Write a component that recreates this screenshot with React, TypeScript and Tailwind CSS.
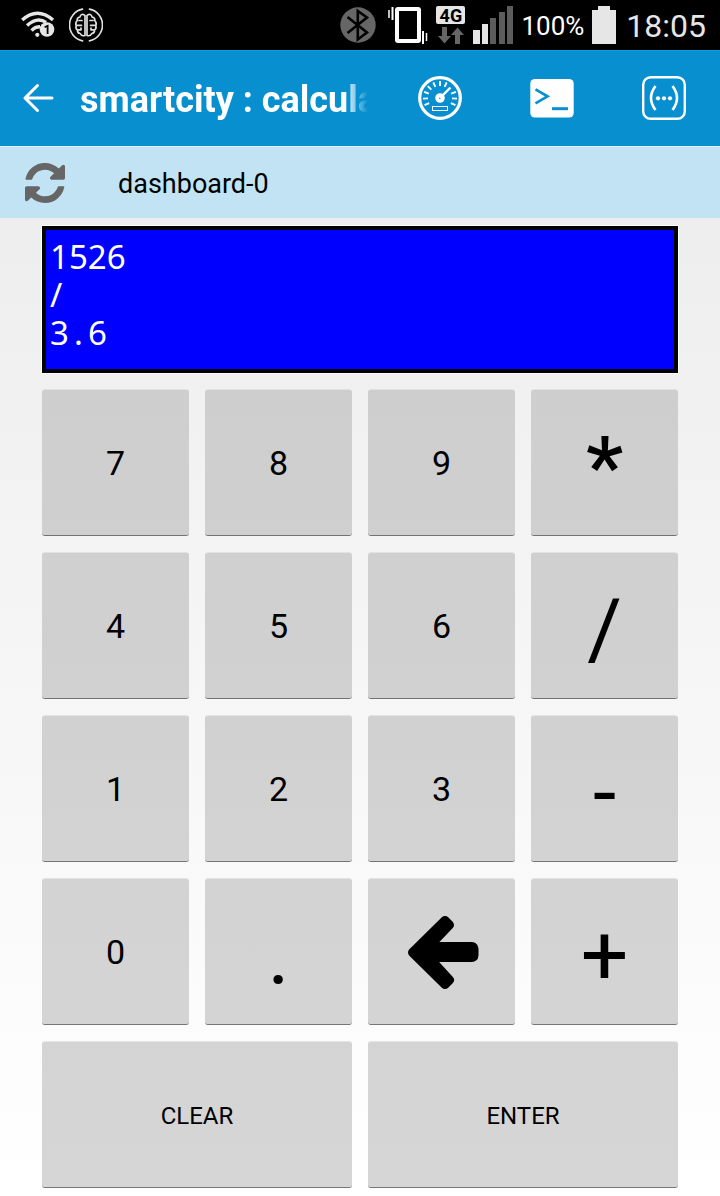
import type { ReactNode } from "react";

function WifiIcon() {
  return (
    <svg width="34" height="28" viewBox="0 0 34 28" fill="none" stroke="#e6e6e6" strokeWidth="3.4">
      <path d="M1.2 9 Q16.5 -4.5 32 9" />
      <path d="M6 14.5 Q16.5 5.2 25 11.4" />
      <path d="M10.6 19.6 Q14 15.8 19 15.8" />
      <circle cx="16.3" cy="23.8" r="2.1" fill="#e6e6e6" stroke="none" />
      <circle cx="26" cy="18.5" r="7.3" fill="#e6e6e6" stroke="none" />
      <path d="M23.6 16.2 L26.6 14.8 V23" stroke="#000" strokeWidth="1.8" />
    </svg>
  );
}

function BrainIcon() {
  return (
    <svg width="34" height="34" viewBox="0 0 34 34" fill="none" stroke="#e0e0e0" strokeWidth="1.7" strokeLinecap="round" strokeLinejoin="round">
      <path d="M13.5 1.2 A16.1 16.1 0 0 0 13.5 32.8 M20.500 1.2 A16.1 16.1 0 0 1 20.500 32.8" />
      <path d="M16 7.500 Q14.500 5.800 12.800 6.500 Q11.200 7 11 9 Q7.800 9.500 8.200 12.500 Q6 15 7.200 17.500 Q6.300 20.500 8.500 22 Q8.200 25 11.200 25.500 Q12.500 28.500 16 27.500 Z" />
      <path d="M18 7.500 Q19.500 5.800 21.200 6.500 Q22.800 7 23 9 Q26.200 9.500 25.800 12.500 Q28 15 26.800 17.500 Q27.700 20.500 25.500 22 Q25.800 25 22.800 25.500 Q21.500 28.500 18 27.500 Z" />
      <path d="M10 12.500 H13 M8.500 17.300 H12.500 M9.500 21.800 H12 V20 M24 12.500 H21 M25.500 17.300 H21.500 M24.500 21.800 H22 V20" />
    </svg>
  );
}

function BluetoothIcon() {
  return (
    <svg width="36" height="36" viewBox="0 0 36 36" fill="none">
      <circle cx="18" cy="18" r="17.700" fill="#666" />
      <path d="M7.500 10 L27 25.500 L17.800 32.500 V4 L27 10.500 L7.500 26" stroke="#000" strokeWidth="2.600" />
    </svg>
  );
}

function VibrateIcon() {
  return (
    <svg width="40" height="38" viewBox="0 0 40 38" fill="none" stroke="#fff">
      <rect x="9" y="3" width="22" height="32" rx="1" strokeWidth="4" />
      <path d="M1 4 V12 M38.500 27 V35" strokeWidth="1.500" />
      <path d="M4.500 1 V14 M35 25 V38" strokeWidth="2" />
    </svg>
  );
}

function DataArrows() {
  return (
    <svg width="26" height="17" viewBox="0 0 26 17" fill="#666">
      <path d="M4 0 H9 V9 H13 L6.500 16.500 L0 9 H4 Z M17 17 H22 V8 H26 L19.500 0.500 L13 8 H17 Z" />
    </svg>
  );
}

function SignalIcon() {
  return (
    <svg width="40" height="38" viewBox="0 0 40 38">
      <path d="M0 24 H7 V38 H0 Z M9 18 H15 V38 H9 Z" fill="#e6e6e6" />
      <path d="M17 12 H23 V38 H17 Z M26 6 H32 V38 H26 Z M34 0 H40 V38 H34 Z" fill="#5c5c5c" />
    </svg>
  );
}

function BatteryIcon() {
  return (
    <svg width="24" height="38" viewBox="0 0 24 38">
      <path d="M6 0 H18 V4 H24 V38 H0 V4 H6 Z" fill="#e6e6e6" />
    </svg>
  );
}

function BackIcon() {
  return (
    <svg width="32" height="30" viewBox="0 0 32 30" fill="none" stroke="#fff" strokeWidth="3" strokeLinecap="round" strokeLinejoin="round">
      <path d="M15.500 2.500 L3 15 L15.500 27.500 M3 15 H30" />
    </svg>
  );
}

const gaugeTicks = [-115, -92, -69, -46, -23, 0, 23, 69, 92, 115];

function GaugeIcon() {
  return (
    <svg width="44" height="44" viewBox="0 0 44 44" fill="none" stroke="#fff">
      <circle cx="22" cy="22" r="20.300" strokeWidth="3.200" />
      {gaugeTicks.map((angle) => (
        <path key={angle} d="M22 5 V10" strokeWidth="1.900" transform={`rotate(${angle} 22 22)`} />
      ))}
      <path d="M22 22 L32.500 11.500" strokeWidth="2.400" />
      <circle cx="22" cy="22" r="2.900" strokeWidth="3.800" />
      <rect x="14.500" y="30.500" width="15" height="4" strokeWidth="1" />
    </svg>
  );
}

function TerminalIcon() {
  return (
    <svg width="44" height="44" viewBox="0 0 44 44" fill="none">
      <rect x="0.300" y="3" width="43.400" height="38.500" rx="4.500" fill="#fff" />
      <path d="M5.500 13.300 L17.500 20.300 L5.500 27.300" stroke="#078fd0" strokeWidth="2.700" />
      <path d="M22 32.700 H38" stroke="#078fd0" strokeWidth="3" />
    </svg>
  );
}

function BracketsIcon() {
  return (
    <svg width="44" height="44" viewBox="0 0 44 44" fill="none" stroke="#fff">
      <rect x="1.200" y="1.200" width="41.600" height="41.600" rx="7.500" strokeWidth="2.400" />
      <path d="M13.500 10 Q4.500 22 13.500 34 M30.500 10 Q39.500 22 30.500 34" strokeWidth="2.600" />
      <g fill="#fff" stroke="none">
        <circle cx="16" cy="22.300" r="2.100" />
        <circle cx="22" cy="22.300" r="2.100" />
        <circle cx="28" cy="22.300" r="2.100" />
      </g>
    </svg>
  );
}

function RefreshIcon() {
  return (
    <svg width="40" height="40" viewBox="0 0 1536 1536" fill="#666">
      <path d="M1511 928q0 5-1 7q-64 268-268 434.500t-478 166.500q-146 0-282.500-55t-243.500-157l-129 129q-19 19-45 19t-45-19t-19-45v-448q0-26 19-45t45-19h448q26 0 45 19t19 45t-19 45l-137 137q71 66 161 102t187 36q134 0 250-65t186-179q11-17 53-117q8-23 30-23h192q13 0 22.500 9.500t9.500 22.500zM1536 128v448q0 26-19 45t-45 19h-448q-26 0-45-19t-19-45t19-45l138-138q-148-137-349-137q-134 0-250 65t-186 179q-11 17-53 117q-8 23-30 23h-199q-13 0-22.500-9.500t-9.500-22.500v-7q65-268 270-434.500t480-166.500q146 0 284 55.500t245 156.500l130-129q19-19 45-19t45 19t19 45z" />
    </svg>
  );
}

function BackspaceArrow() {
  return (
    <svg width="74" height="76" viewBox="0 0 74 76" stroke="#000" strokeLinejoin="round">
      <path d="M40 6.500 L44.500 11 L24 32.500 H66 Q69 32.500 69 34.500 V41.500 Q69 43.500 66 43.500 H24 L44.500 66 L40 70.500 L7.500 38.500 Z" strokeWidth="9" />
    </svg>
  );
}

type KeyProps = { children: ReactNode; kind?: "digit" | "symbol" | "wide"; label?: string };

const kinds = {
  digit: "aspect-square text-[34px]",
  symbol: "aspect-square pt-2 text-[84px]",
  wide: "col-span-2 pt-0.5 text-2xl",
};

function Key({ children, kind = "digit", label }: KeyProps) {
  return (
    <button
      type="button"
      aria-label={label}
      className={`flex min-w-0 items-center justify-center rounded-[3px] border-t border-b border-t-white/40 border-b-black/45 bg-[rgba(161,161,161,0.44)] leading-none ${kinds[kind]}`}
    >
      {children}
    </button>
  );
}

export default function App() {
  return (
    <div className="flex min-h-screen flex-col bg-linear-to-b from-[#eaeaea] to-white font-['Roboto',sans-serif] text-black">
      <div className="flex h-[50px] items-center justify-between bg-black pr-[14px] pl-[21px] text-[#e6e6e6]">
        <div className="flex items-center gap-[14px]">
          <WifiIcon />
          <BrainIcon />
        </div>
        <div className="flex items-center gap-2">
          <BluetoothIcon />
          <div className="pl-1">
            <VibrateIcon />
          </div>
          <div className="flex flex-col items-center gap-[3px]">
            <span className="flex h-[18px] w-[29px] items-center justify-center rounded-[2px] bg-[#e6e6e6] text-[18px] font-bold text-black">
              4G
            </span>
            <DataArrows />
          </div>
          <SignalIcon />
          <span className="pt-0.5 text-[26px] leading-8 text-white">100%</span>
          <BatteryIcon />
          <span className="pt-0.5 pl-0.5 text-[32px] leading-8">18:05</span>
        </div>
      </div>

      <header className="flex h-24 items-center border-t border-[#0a9be2] bg-[#078fd0] pb-0.5 text-white">
        <button type="button" aria-label="Back" className="flex w-20 shrink-0 pl-[22px]">
          <BackIcon />
        </button>
        <h1 className="mr-4 min-w-0 flex-1 overflow-hidden pt-1 text-[36px] leading-10 font-bold whitespace-nowrap [mask-image:linear-gradient(to_right,black_calc(100%-24px),transparent)]">
          smartcity : calcula
        </h1>
        <nav className="flex shrink-0">
          <button type="button" aria-label="Dashboards" className="flex w-28 justify-center">
            <GaugeIcon />
          </button>
          <button type="button" aria-label="Console" className="flex w-28 justify-center">
            <TerminalIcon />
          </button>
          <button type="button" aria-label="Variables" className="flex w-28 justify-center">
            <BracketsIcon />
          </button>
        </nav>
      </header>

      <div className="flex h-[72px] items-center border-t border-[#dcf0f9] bg-[#c1e3f4]">
        <button type="button" aria-label="Refresh" className="flex w-[118px] pl-[25px]">
          <RefreshIcon />
        </button>
        <span className="pt-0.5 text-[27px] leading-8">dashboard-0</span>
      </div>

      <main className="flex flex-col gap-4 px-[42px] py-2">
        <output className="block h-[147px] border-4 border-black bg-[#0000ff] px-1 py-2 font-['Noto_Sans',sans-serif] text-[33px] leading-[38px] text-white outline outline-white">
          <p>1526</p>
          <p>/</p>
          <p>
            3<span className="inline-block w-[19px] text-center">.</span>6
          </p>
        </output>
        <div className="grid grid-cols-4 gap-4">
          <Key>7</Key>
          <Key>8</Key>
          <Key>9</Key>
          <Key kind="symbol">
            <span className="font-medium">*</span>
          </Key>
          <Key>4</Key>
          <Key>5</Key>
          <Key>6</Key>
          <Key kind="symbol">/</Key>
          <Key>1</Key>
          <Key>2</Key>
          <Key>3</Key>
          <Key kind="symbol">-</Key>
          <Key>0</Key>
          <Key kind="symbol">.</Key>
          <Key label="Delete">
            <BackspaceArrow />
          </Key>
          <Key kind="symbol">+</Key>
        </div>
        <div className="grid h-[147px] grid-cols-4 gap-4">
          <Key kind="wide">CLEAR</Key>
          <Key kind="wide">ENTER</Key>
        </div>
      </main>
    </div>
  );
}
